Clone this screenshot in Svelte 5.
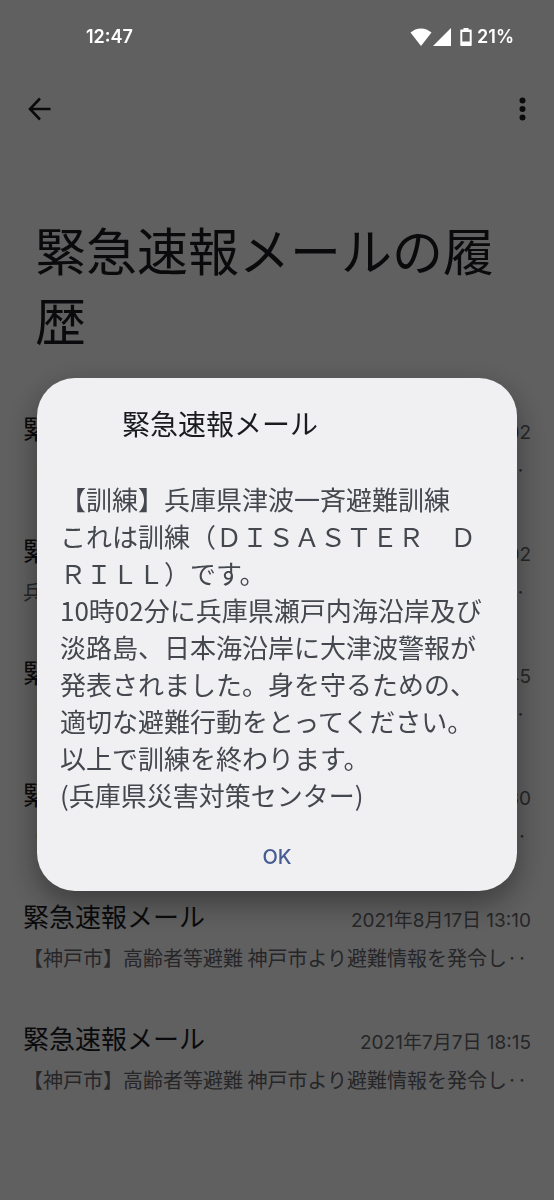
<script>
	let open = true;

	const title = "緊急速報メール";

	const mails = [
		{ date: "2022年6月17日 10:02", text: "［訓練］兵庫県津波一斉避難訓練 これは訓練です。兵‥" },
		{ date: "2022年6月17日 10:02", text: "兵庫県津波一斉避難訓練 これは訓練です。兵庫県瀬戸‥" },
		{ date: "2021年9月5日 10:45", text: "［訓練］神戸市総合防災訓練 これは訓練です。神戸市‥" },
		{ date: "2021年8月18日 9:30", text: "（神戸市）高齢者等避難 神戸市より避難情報を発令し‥" },
		{ date: "2021年8月17日 13:10", text: "【神戸市】高齢者等避難 神戸市より避難情報を発令し‥" },
		{ date: "2021年7月7日 18:15", text: "【神戸市】高齢者等避難 神戸市より避難情報を発令し‥" },
	];

	const body = [
		"【訓練】兵庫県津波一斉避難訓練",
		"これは訓練（ＤＩＳＡＳＴＥＲ　ＤＲＩＬＬ）です。",
		"10時02分に兵庫県瀬戸内海沿岸及び淡路島、日本海沿岸に大津波警報が発表されました。身を守るための、適切な避難行動をとってください。",
		"以上で訓練を終わります。",
		"(兵庫県災害対策センター)",
	];
</script>

<header class="status">
	<time>12:47</time>
	<div class="icons">
		<svg width="22" height="18" viewBox="0 0 22 18" aria-hidden="true">
			<path d="M11 18 0.5 4.6C3.4 1.9 7 0.4 11 0.4s7.6 1.5 10.5 4.2z" fill="#fff" />
		</svg>
		<svg width="18" height="18" viewBox="0 0 18 18" aria-hidden="true">
			<path d="M18 0v18H0z" fill="#fff" />
		</svg>
		<svg class="battery" width="12" height="18" viewBox="0 0 12 18" aria-hidden="true">
			<path fill-rule="evenodd" d="M3.5 0h5v1.6h2.200c.6 0 1 .4 1 1v14.400c0 .6-.4 1-1 1H1.300c-.6 0-1-.4-1-1V2.600c0-.6.4-1 1-1h2.200zM2.300 4v9.600h7.400V4z" fill="#fff" />
		</svg>
		<span>21%</span>
	</div>
</header>

<main>
	<nav>
		<button class="icon" aria-label="戻る">
			<svg width="24" height="24" viewBox="0 0 24 24">
				<path d="M12 1.5 2 12l10 10.5M2 12H22.5" fill="none" stroke="currentColor" stroke-width="2.6" />
			</svg>
		</button>
		<button class="icon" aria-label="その他">
			<svg width="24" height="24" viewBox="0 0 24 24">
				<circle cx="12.5" cy="3.5" r="3" />
				<circle cx="12.5" cy="12" r="3" />
				<circle cx="12.5" cy="20.5" r="3" />
			</svg>
		</button>
	</nav>

	<h1>緊急速報メールの履歴</h1>

	<ul>
		{#each mails as mail}
			<li>
				<div class="row">
					<h2>{title}</h2>
					<time>{mail.date}</time>
				</div>
				<p>{mail.text}</p>
			</li>
		{/each}
	</ul>
</main>

{#if open}
	<div class="scrim">
		<dialog open aria-labelledby="alert-title">
			<h2 id="alert-title">{title}</h2>
			<div class="body">
				{#each body as line}
					<p>{line}</p>
				{/each}
			</div>
			<button class="ok" on:click={() => open = false}>OK</button>
		</dialog>
	</div>
{/if}

<style>
	:global(body) {
		margin: 0;
		background: #f0f0f2;
		font-family: "Noto Sans CJK JP", sans-serif;
		text-spacing-trim: space-all;
	}
	h1, h2, p, ul {
		margin: 0;
		padding: 0;
		font-weight: 400;
	}
	button {
		border: 0;
		background: none;
		font: inherit;
		cursor: pointer;
	}
	.status {
		position: fixed;
		z-index: 2;
		top: 0;
		left: 0;
		right: 0;
		height: 73px;
		box-sizing: border-box;
		padding: 0 40px 0 86px;
		display: flex;
		align-items: center;
		justify-content: space-between;
		color: #fff;
		font: 600 18px/24px Inter, sans-serif;
	}
	.icons {
		display: flex;
		align-items: center;
		gap: 1px;
	}
	.battery {
		margin: 0 4px 0 8px;
	}
	main {
		min-height: 100vh;
		box-sizing: border-box;
		padding-top: 72px;
		color: #1a1b1e;
	}
	nav {
		display: flex;
		justify-content: space-between;
		padding: 13px 8px 0 16px;
	}
	.icon {
		width: 48px;
		height: 48px;
		padding: 12px;
		color: inherit;
		fill: currentColor;
	}
	.icon svg {
		display: block;
	}
	h1 {
		padding: 81px 35px 0;
		font-size: 51px;
		line-height: 70px;
	}
	ul {
		list-style: none;
		padding: 55px 23px 0;
	}
	li {
		height: 122px;
	}
	.row {
		display: flex;
		align-items: baseline;
		justify-content: space-between;
	}
	.row h2 {
		font-size: 26px;
		line-height: 38px;
	}
	.row time {
		font: 19px/30px Inter, "Noto Sans CJK JP", sans-serif;
		color: #5f6064;
	}
	li p {
		padding-top: 7px;
		font-size: 20px;
		line-height: 30px;
		color: #5f6064;
		white-space: nowrap;
	}
	.scrim {
		position: fixed;
		z-index: 1;
		inset: 0;
		box-sizing: border-box;
		padding: 69px 37px 0;
		display: flex;
		align-items: center;
		background: rgba(0, 0, 0, .6);
	}
	dialog {
		position: static;
		flex: 1;
		box-sizing: border-box;
		margin: 0;
		padding: 25px 23px 10px;
		border: 0;
		border-radius: 38px;
		background: #f0f0f3;
		color: #44474e;
		box-shadow: 0 12px 32px rgba(0, 0, 0, .4);
	}
	dialog h2 {
		padding-left: 62px;
		font-size: 28px;
		line-height: 40px;
		color: #1a1b1e;
	}
	.body {
		padding: 37px 0 20px;
		font-size: 26px;
		line-height: 37px;
	}
	.ok {
		display: block;
		margin: 0 auto;
		padding: 0 24px;
		height: 48px;
		color: #475d92;
		font: 500 20px/24px Inter, sans-serif;
	}
</style>
